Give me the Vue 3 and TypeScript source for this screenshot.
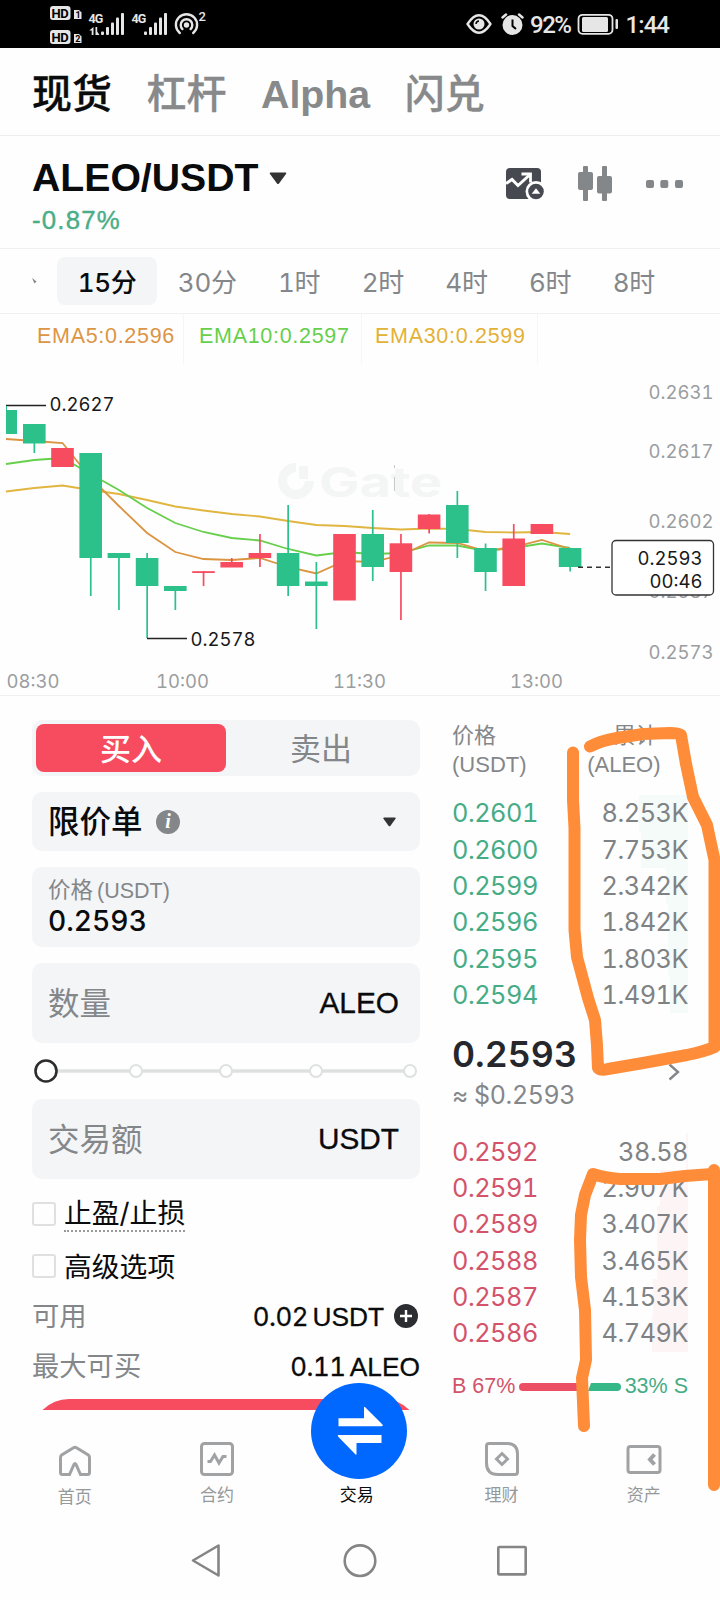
<script setup lang="ts">
interface Candle {
  open: number
  close: number
  high: number
  low: number
  up?: boolean
}
interface BookRow {
  price: string
  total: string
  depth: number
}

const topTabs = ['现货', '杠杆', 'Alpha', '闪兑']
const periods = ['15分', '30分', '1时', '2时', '4时', '6时', '8时']
const emas = [
  { text: 'EMA5:0.2596', tone: 'ema-orange' },
  { text: 'EMA10:0.2597', tone: 'ema-green' },
  { text: 'EMA30:0.2599', tone: 'ema-yellow' },
]

/* Vertical pixel positions inside the chart canvas; rising candles are red */
const candles: Candle[] = [
  { open: 424, close: 443.5, high: 424, low: 453 },
  { open: 448, close: 467, high: 448, low: 467, up: true },
  { open: 453, close: 558, high: 453, low: 596 },
  { open: 553, close: 558, high: 553, low: 610 },
  { open: 558, close: 586, high: 553, low: 638 },
  { open: 586, close: 591, high: 586, low: 610 },
  { open: 571.2, close: 573, high: 571, low: 586, up: true },
  { open: 562, close: 567.5, high: 558, low: 567, up: true },
  { open: 553, close: 558, high: 534, low: 567, up: true },
  { open: 553, close: 586, high: 505, low: 596 },
  { open: 581.5, close: 586, high: 562, low: 629 },
  { open: 534, close: 600.5, high: 534, low: 600, up: true },
  { open: 534, close: 567, high: 510, low: 581 },
  { open: 543.3, close: 572, high: 534, low: 620, up: true },
  { open: 514.5, close: 529, high: 514, low: 533.5, up: true },
  { open: 505, close: 543, high: 491, low: 558 },
  { open: 548, close: 572, high: 543.5, low: 591 },
  { open: 538.5, close: 586, high: 524, low: 586, up: true },
  { open: 524, close: 534, high: 524, low: 534, up: true },
  { open: 548, close: 567, high: 548, low: 571.5 },
]
const cx = (i: number): number => 34.3 + 28.2 * i

const lineOf = (ys: number[]): string =>
  ys.map((y, i) => `${i === 0 ? 6 : cx(i - 1).toFixed(1)},${y}`).join(' ')

const ema5 = lineOf([439, 441, 443, 478, 506, 533, 552, 559, 560, 558, 567, 573.5, 561, 562, 555, 542.5, 543, 551, 547, 540, 549])
const ema10 = lineOf([464, 460, 458, 474, 490, 508, 523, 532, 538, 540.5, 549, 555.5, 552, 554, 553, 545.5, 545.5, 551, 548, 543.5, 548])
const ema30 = lineOf([491.5, 488, 485.5, 490, 494, 500, 506.5, 510.5, 514, 516.5, 521, 525, 526, 528, 529.5, 528.5, 529, 532, 532.5, 532, 534])

const axisPrices = [
  { text: '0.2631', y: 399 },
  { text: '0.2617', y: 458 },
  { text: '0.2602', y: 528 },
  { text: '0.2587', y: 598 },
  { text: '0.2573', y: 659 },
]
const axisTimes = [
  { text: '08:30', x: 6.5 },
  { text: '10:00', x: 156 },
  { text: '11:30', x: 333 },
  { text: '13:00', x: 510 },
]

const greens: BookRow[] = [
  { price: '0.2601', total: '8.253K', depth: 49 },
  { price: '0.2600', total: '7.753K', depth: 47 },
  { price: '0.2599', total: '2.342K', depth: 22 },
  { price: '0.2596', total: '1.842K', depth: 20 },
  { price: '0.2595', total: '1.803K', depth: 20 },
  { price: '0.2594', total: '1.491K', depth: 18 },
]
const reds: BookRow[] = [
  { price: '0.2592', total: '38.58', depth: 2 },
  { price: '0.2591', total: '2.907K', depth: 28 },
  { price: '0.2589', total: '3.407K', depth: 31 },
  { price: '0.2588', total: '3.465K', depth: 31 },
  { price: '0.2587', total: '4.153K', depth: 35 },
  { price: '0.2586', total: '4.749K', depth: 36 },
]
</script>

<template>
  <div class="screen">
    <header class="status">
      <svg width="720" height="48" viewBox="0 0 720 48">
        <g fill="#e6e6e6">
          <rect x="50" y="6" width="20.5" height="14" rx="3" />
          <rect x="50" y="30" width="20.5" height="14" rx="3" />
          <path d="M74 10h5l2.5 2.5V19H74z" />
          <path d="M74 34h5l2.5 2.5V43H74z" />
          <text x="88.5" y="23" class="net">4G</text>
          <text x="131.5" y="23" class="net">4G</text>
          <text x="198.5" y="21" class="sup">2</text>
          <g v-for="o in [0, 43]" :key="o" :transform="`translate(${o} 0)`">
            <rect x="101" y="31.5" width="3" height="3.5" rx="1" />
            <rect x="106" y="27" width="3" height="8" rx="1" />
            <rect x="111" y="22.5" width="3" height="12.5" rx="1" />
            <rect x="116" y="17.5" width="3" height="17.5" rx="1" />
            <rect x="121" y="13" width="3" height="22" rx="1" />
          </g>
          <path d="M93.500 27v8h-1.800v-4.500H89.200zM95.500 27v8h4l-2.300-3.500V27z" />
          <circle cx="186.500" cy="25" r="2.700" />
          <circle cx="479" cy="24" r="5.500" />
          <circle cx="512.500" cy="25" r="10" />
          <rect x="582" y="17" width="26" height="15" rx="1.500" />
          <rect x="615.500" y="19" width="2.500" height="10" rx="1" />
          <text x="530" y="33" class="clock" textLength="42">92%</text>
          <text x="625.500" y="33" class="clock" textLength="44.500">1:44</text>
        </g>
        <g fill="#000">
          <text x="51.500" y="18" class="hd">HD</text>
          <text x="51.500" y="42" class="hd">HD</text>
          <text x="75.500" y="18" class="sim">1</text>
          <text x="75.200" y="42.200" class="sim">2</text>
        </g>
        <g fill="none" stroke="#e6e6e6" stroke-width="2.400" stroke-linecap="round">
          <path d="M182.400 29.100a5.800 5.800 0 1 1 8.200 0" />
          <path d="M179.800 33a10.600 10.600 0 1 1 13.400 0" />
          <path d="M467.500 24q11.500 -17.500 23 0q-11.500 17.500 -23 0z" stroke-linejoin="round" />
          <path d="M502.500 17.500l3.500-3M522.500 17.500l-3.500-3" />
          <rect x="578.500" y="14.800" width="34" height="19" rx="4" stroke-width="1.800" />
        </g>
        <path d="M476 24a3.200 3.200 0 0 1 3-3" stroke="#000" stroke-width="1.500" fill="none" />
        <path d="M512.500 19.500v6.500l3.500 3" stroke="#000" stroke-width="2" fill="none" />
      </svg>
    </header>

    <nav class="tabs">
      <span v-for="(t, i) in topTabs" :key="t" :class="{ on: i === 0, latin: t === 'Alpha' }">{{ t }}</span>
    </nav>

    <section class="pair">
      <div>
        <div class="name">
          <span>ALEO/USDT</span>
          <svg width="18" height="13" viewBox="0 0 18 13"><path d="M1.500 .5h15q1.500 0 .5 1.500l-7 9.500q-1 1-2 0l-7-9.500q-1-1.500 .5-1.500z" fill="#333" /></svg>
        </div>
        <div class="change">-0.87%</div>
      </div>
      <div class="tools">
        <svg width="38" height="36" viewBox="0 0 38 36">
          <rect x="0" y="2" width="35" height="31" rx="4" fill="#464a50" />
          <path d="M0 17.500l6-4 6 6 11-10" fill="none" stroke="#fff" stroke-width="3" />
          <path d="M15.500 8h9v8.500" fill="none" stroke="#fff" stroke-width="2.800" />
          <circle cx="30" cy="25.500" r="10.500" fill="#fff" />
          <circle cx="30" cy="25.500" r="7.800" fill="#464a50" />
          <path d="M25.700 27.800l4.300-5.500 4.300 5.500z" fill="#fff" />
        </svg>
        <svg width="36" height="36" viewBox="0 0 36 36" fill="#84878a">
          <rect x="6" y="0" width="5" height="35" rx="1" />
          <rect x="1" y="6" width="15" height="18" rx="2" />
          <rect x="25" y="0" width="5" height="35" rx="1" />
          <rect x="20" y="10" width="15" height="17.500" rx="2" />
        </svg>
        <svg width="37" height="8" viewBox="0 0 37 8" fill="#84878a">
          <rect width="8" height="8" rx="2" /><rect x="14.300" width="8" height="8" rx="2" /><rect x="29" width="8" height="8" rx="2" />
        </svg>
      </div>
    </section>

    <section class="periods">
      <svg class="tail" width="5" height="6" viewBox="0 0 5 6"><path d="M0 0l4.500 3.500-2 2z" fill="#84878a" /></svg>
      <span v-for="(p, i) in periods" :key="p" :class="{ on: i === 0 }">{{ p }}</span>
    </section>

    <section class="chart">
      <div class="emas">
        <span v-for="e in emas" :key="e.text" :class="e.tone">{{ e.text }}</span>
      </div>
      <svg class="canvas" width="720" height="329" viewBox="0 366 720 329">
        <g fill="#f4f5f5">
          <path d="M296 463a18 18 0 1 0 18 18h-9a9 9 0 1 1-9-9z" />
          <rect x="299" y="466" width="9" height="13" />
          <text x="319" y="497" class="mark" textLength="123" lengthAdjust="spacingAndGlyphs">Gate</text>
        </g>
        <path d="M394.500 465v3m0 9v14" stroke="#c8c8c8" />
        <g fill="none" stroke-width="1.800">
          <polyline :points="ema30" stroke="#e0b540" />
          <polyline :points="ema10" stroke="#67cf4c" />
          <polyline :points="ema5" stroke="#db9440" />
        </g>
        <rect x="6" y="410" width="11" height="24" fill="#2cc08a" />
        <g v-for="(c, i) in candles" :key="i" :fill="c.up ? '#f74b60' : '#2cc08a'">
          <rect :x="cx(i) - 0.800" :y="c.high" width="1.700" :height="c.low - c.high" />
          <rect :x="cx(i) - 11.300" :y="c.open" width="22.600" :height="c.close - c.open" />
        </g>
        <path d="M6 405.500h40M147 638.500h40" stroke="#222" stroke-width="1.300" />
        <path d="M6.500 406v5" stroke="#2cc08a" />
        <path d="M578 567.300h34" stroke="#333" stroke-width="1.400" stroke-dasharray="5 4" />
        <g class="num ink">
          <text x="49.500" y="411">0.2627</text>
          <text x="190.500" y="646">0.2578</text>
        </g>
        <g class="num axis">
          <text v-for="a in axisPrices" :key="a.text" x="713.500" :y="a.y" text-anchor="end">{{ a.text }}</text>
          <text v-for="a in axisTimes" :key="a.text" :x="a.x" y="687.500">{{ a.text }}</text>
        </g>
        <rect x="612" y="540.500" width="101.500" height="54.500" rx="4" fill="#fff" stroke="#333" stroke-width="1.300" />
        <g class="num ink" text-anchor="end">
          <text x="702.500" y="564.500">0.2593</text>
          <text x="702.500" y="587.500">00:46</text>
        </g>
      </svg>
    </section>

    <main class="trade">
      <section class="form">
        <div class="side"><b>买入</b><span>卖出</span></div>
        <div class="field type">
          <span class="strong">限价单</span>
          <svg class="info" width="24" height="24" viewBox="0 0 24 24">
            <circle cx="12" cy="12" r="12" fill="#84878a" />
            <text x="12" y="18" text-anchor="middle" class="i">i</text>
          </svg>
          <svg class="caret" width="13" height="10" viewBox="0 0 13 10"><path d="M1 .5h11q1.200 0 .5 1.200l-5 7q-1 1-2 0l-5-7Q-.2 .5 1 .5z" fill="#333" /></svg>
        </div>
        <div class="field price">
          <span class="cap">价格<i>(USDT)</i></span>
          <span class="val">0.2593</span>
        </div>
        <div class="field box"><span>数量</span><em>ALEO</em></div>
        <svg class="slider" width="388" height="56" viewBox="32 1043 388 56">
          <path d="M56 1071h350" stroke="#dfe1e1" stroke-width="3.600" />
          <g fill="#fff" stroke="#dfe1e1" stroke-width="2">
            <circle v-for="x in [136, 226, 316, 410]" :key="x" :cx="x" cy="1071" r="6" />
          </g>
          <circle cx="46" cy="1071" r="10.500" fill="#fff" stroke="#2c2d2e" stroke-width="2.600" />
        </svg>
        <div class="field box"><span>交易额</span><em>USDT</em></div>
        <label class="check first"><s></s><span class="dotted">止盈/止损</span></label>
        <label class="check"><s></s><span>高级选项</span></label>
        <div class="kv">
          <span>可用</span>
          <em>0.02 <i>USDT</i></em>
          <svg width="24" height="24" viewBox="0 0 24 24"><circle cx="12" cy="12" r="12" fill="#2c2d30" /><path d="M12 6v12M6 12h12" stroke="#fff" stroke-width="2.400" /></svg>
        </div>
        <div class="kv max"><span>最大可买</span><em>0.11 <i>ALEO</i></em></div>
        <div class="submit"><i></i></div>
      </section>

      <section class="book">
        <div class="bhead">
          <div>价格<br />(USDT)</div>
          <div class="cum"><span>累计</span><span>(ALEO)</span></div>
        </div>
        <div v-for="r in greens" :key="r.price" class="row g">
          <span>{{ r.price }}</span><span>{{ r.total }}</span><u :style="{ width: r.depth + 'px' }"></u>
        </div>
        <div class="last">
          <strong>0.2593</strong>
          <div class="approx"><span>≈ $0.2593</span></div>
          <svg class="chev" width="12" height="18" viewBox="0 0 12 18"><path d="M1.500 1.500L10 9l-8.500 7.500" fill="none" stroke="#84878a" stroke-width="2.400" /></svg>
        </div>
        <div v-for="r in reds" :key="r.price" class="row r">
          <span>{{ r.price }}</span><span>{{ r.total }}</span><u :style="{ width: r.depth + 'px' }"></u>
        </div>
        <div class="ratio">
          <span class="rb">B 67%</span>
          <svg width="102" height="8" viewBox="0 0 102 8">
            <path d="M4 0h64l-3 8H4a4 4 0 0 1 0-8z" fill="#ec4f63" />
            <path d="M72 0h26a4 4 0 0 1 0 8H69z" fill="#35b788" />
          </svg>
          <span class="rs">33% S</span>
        </div>
      </section>
    </main>

    <nav class="bottom">
      <div>
        <svg width="34" height="36" viewBox="0 0 34 36" class="ico">
          <path d="M2.500 15.500q0-1.500 1.200-2.500L15.500 5.800q1.500-1 3 0L30.300 13q1.200 1 1.200 2.500V30.500q0 2-2 2h-7L18 22.500q-1-2-2 0L11.500 32.500h-7q-2 0-2-2z" />
        </svg>
        <span class="low">首页</span>
      </div>
      <div>
        <svg width="34" height="36" viewBox="0 0 34 36" class="ico">
          <rect x="1.500" y="1.500" width="31" height="31" rx="3" />
          <path d="M7.500 19.500h3l4-6.500 4.500 8 4-6.500h3.500" />
        </svg>
        <span>合约</span>
      </div>
      <div class="now">
        <svg class="fab" width="96" height="96" viewBox="0 0 96 96">
          <circle cx="48" cy="48" r="48" fill="#0068ff" />
          <path d="M27.500 35.300h25.500V24.500q0-1.500 1.200-.3L71.500 41.500q1 1.700-.8 1.700H27.500z" fill="#fff" />
          <path d="M70.500 60H45.500v11q0 1.500-1.200 .3L27 53.500q-1-1.500 .8-1.500h42.700z" fill="#fff" />
        </svg>
        <span>交易</span>
      </div>
      <div>
        <svg width="34" height="36" viewBox="0 0 34 36" class="ico">
          <path d="M4 1.500h18q10.500 0 10.500 10.500v18q0 2.500-2.500 2.500H13Q1.500 32.500 1.500 21V4q0-2.500 2.500-2.500z" />
          <path d="M17 11.500l5.500 5.500-5.500 5.500-5.500-5.500z" />
        </svg>
        <span>理财</span>
      </div>
      <div>
        <svg width="36" height="36" viewBox="0 0 36 36" class="ico">
          <rect x="2" y="4.500" width="32" height="26" rx="2.500" />
          <path d="M28.500 12.500l-4.500 5 4.500 5" stroke-width="4" />
        </svg>
        <span>资产</span>
      </div>
    </nav>

    <footer class="system">
      <svg width="720" height="90" viewBox="0 1510 720 90" fill="none" stroke="#858585" stroke-width="2.600" stroke-linejoin="round">
        <path d="M193 1559.500L218.500 1544.500v30z" />
        <circle cx="360" cy="1559.700" r="15.300" />
        <rect x="498.300" y="1546" width="27.400" height="27.400" rx="1" />
      </svg>
    </footer>

    <svg class="marker" width="720" height="1600" viewBox="0 0 720 1600">
      <path d="M573 752.500L573 800L574.500 828L574.500 930L577 957L588 998L595 1020L597 1045L598 1068Q601 1071 608 1069L643 1063L687 1055Q706 1051 714.500 1047V860L707 825L693 797L686 764L681 735Q678 733 670 733L643 734L617 738Q600 741 590 746.500" />
      <path d="M714 1170V1485M712 1174L685 1176L660 1179L620 1179Q605 1178 593 1174L585 1195L581 1215L580 1240L581 1277L585 1310L586 1360L582 1378L583 1402L584 1426" />
    </svg>
  </div>
</template>

<style>
body {
  margin: 0;
  background: #fff;
}
</style>

<style scoped>
.screen {
  position: relative;
  width: 720px;
  height: 1600px;
  overflow: hidden;
  background: #fefefe;
  color: #0a0b0c;
  font-family: Inter, "Noto Sans CJK SC", sans-serif;
  font-feature-settings: "tnum";
}
svg { display: block; flex: none; }
em, i { font-style: normal; }
.status { height: 48px; background: #000; }
.net { font: 700 12.5px Roboto, sans-serif; letter-spacing: -0.8px; }
.sup { font: 500 13px Roboto, sans-serif; }
.hd { font: 700 13px Roboto, sans-serif; letter-spacing: -0.5px; }
.sim { font: 700 9px Roboto, sans-serif; }
.clock { font: 500 24px Roboto, sans-serif; }

.tabs {
  box-sizing: border-box;
  height: 88px;
  padding: 4px 32px 0;
  display: flex;
  align-items: center;
  gap: 34.5px;
  border-bottom: 1px solid #eee;
  font-size: 40px;
  line-height: 56px;
  font-weight: 500;
  color: #87898b;
}
.tabs span { -webkit-text-stroke: 0.3px currentColor; }
.tabs .on { color: #0a0b0c; }
.tabs .latin { font-family: "Liberation Sans", sans-serif; font-size: 39.300px; font-weight: 700; -webkit-text-stroke: 0; }
.pair {
  box-sizing: border-box;
  height: 113px;
  padding: 22px 37px 0 32px;
  display: flex;
  justify-content: space-between;
  border-bottom: 1px solid #f0f0f0;
}
.name {
  display: flex;
  align-items: center;
  gap: 11px;
  font-family: "Liberation Sans", sans-serif;
  font-size: 39.200px;
  font-weight: 700;
  line-height: 42px;
  margin-top: -1px;
}
.change {
  margin-top: 6px;
  font-family: "Liberation Sans", sans-serif;
  font-size: 25.800px;
  letter-spacing: 1.200px;
  line-height: 31px;
  -webkit-text-stroke: 0.4px #4bad87;
  color: #4bad87;
}
.tools { display: flex; align-items: center; height: 52px; gap: 33px; }
.periods {
  box-sizing: border-box;
  height: 65px;
  padding-left: 32px;
  display: flex;
  align-items: center;
  border-bottom: 1px solid #f0f0f0;
  font-size: 26px;
  line-height: 44px;
  letter-spacing: -0.3px;
  color: #84878a;
}
.periods span { box-sizing: border-box; height: 48px; padding: 4px 20.700px 0; white-space: nowrap; }
.periods .on { margin-left: 20px; border-radius: 8px; background: #f4f5f7; color: #0a0b0c; font-weight: 500; }
.chart { height: 382px; box-sizing: border-box; border-bottom: 1px solid #f0f0f0; }
.emas {
  display: flex;
  height: 52px;
  padding-left: 30px;
  font-family: "Liberation Sans", sans-serif;
  font-size: 21.500px;
  letter-spacing: 0.700px;
  line-height: 45px;
}
.emas span { box-sizing: border-box; height: 50px; padding-left: 7px; border-right: 1px solid #f6f6f6; white-space: nowrap; }
.ema-orange { width: 154px; color: #dc9545; }
.emas .ema-green { width: 178px; padding-left: 15px; color: #66cf4c; }
.emas .ema-yellow { width: 176px; padding-left: 13px; color: #e3b137; }
.mark { font: 700 41px Inter, sans-serif; }
.num { font-size: 18.500px; }
.ink { fill: #17181a; }
.axis { fill: #9a9d9f; }

.trade { display: flex; height: 714px; overflow: hidden; }
.form { width: 388px; margin-left: 32px; padding-top: 24px; }
.side {
  box-sizing: border-box;
  height: 56px;
  padding: 4px;
  display: flex;
  border-radius: 10px;
  background: #f4f5f7;
  font-size: 31px;
  line-height: 48px;
  text-align: center;
}
.side b { width: 190px; border-radius: 8px; background: #f74b60; color: #fff; font-weight: 500; line-height: 50px; height: 48px; }
.side span { flex: 1; font-weight: 400; color: #84878a; line-height: 50px; height: 48px; }
.field { box-sizing: border-box; display: flex; padding: 0 21px 0 16px; border-radius: 10px; background: #f4f5f7; }
.type { height: 59px; margin-top: 16px; align-items: center; }
.strong { font-size: 31.500px; font-weight: 500; line-height: 58px; margin-top: 1px; }
.info { margin-left: 13.500px; }
.i { font: italic 700 20px "Liberation Serif", serif; fill: #fff; }
.caret { margin-left: auto; margin-right: 3px; }
.price { height: 80px; margin-top: 16px; flex-direction: column; padding-top: 8px; }
.cap { font-size: 22.500px; line-height: 30px; color: #84878a; }
.cap i { margin-left: 4px; font-family: "Liberation Sans", sans-serif; font-size: 21.500px; }
.val { margin-top: -2px; font-size: 28.200px; font-weight: 500; line-height: 34px; }
.box { height: 80px; margin-top: 16px; align-items: center; justify-content: space-between; line-height: 78px; font-size: 31.500px; color: #84878a; }
.box span { margin-top: 2px; }
.box em { color: #0a0b0c; font-family: "Liberation Sans", sans-serif; font-size: 29.800px; -webkit-text-stroke: 0.3px #0a0b0c; }
.slider + .box { margin-top: 0; }
.check { display: flex; align-items: center; height: 40px; margin-top: 12px; font-size: 27.800px; }
.check.first { margin-top: 15px; }
.check s { box-sizing: border-box; width: 24px; height: 24px; border: 2px solid #dfe0e1; border-radius: 3px; margin-right: 8px; }
.check span { line-height: 38px; margin-top: 2px; }
.check .dotted { box-sizing: border-box; height: 36px; line-height: 35px; border-bottom: 2px dotted #999; margin-top: -1px; }
.kv { display: flex; align-items: center; height: 50px; margin-top: 5px; font-size: 27.300px; line-height: 48px; color: #84878a; }
.kv span { margin-top: 2px; }
.kv em { margin-left: auto; margin-top: 2px; color: #0a0b0c; font-size: 25.800px; word-spacing: -2px; -webkit-text-stroke: 0.3px #0a0b0c; letter-spacing: -0.500px; }
.kv em i { font-family: "Liberation Sans", sans-serif; font-size: 26.300px; letter-spacing: 0; }
.kv svg { margin-left: 10px; margin-right: 2px; }
.kv.max { margin-top: 0; }
.submit { margin-top: 8px; height: 13px; overflow: hidden; }
.submit i { display: block; height: 80px; border-radius: 37px; background: #f74b60; }

.book { width: 236px; margin-left: 32px; padding-top: 24px; }
.bhead { box-sizing: border-box; display: flex; justify-content: space-between; height: 75px; padding-top: 1px; font-family: "Liberation Sans", "Noto Sans CJK SC", sans-serif; font-size: 22px; line-height: 29px; color: #84878a; }
.cum { display: flex; flex-direction: column; align-items: flex-end; margin-right: 27.500px; }
.cum span:first-child { margin-right: 3px; }
.row {
  position: relative;
  height: 36.4px;
  display: flex;
  align-items: center;
  justify-content: space-between;
  font-size: 25.300px;
  letter-spacing: -0.500px;
  line-height: 36px;
  color: #7f8284;
}
.row span { position: relative; z-index: 1; }
.row u { position: absolute; right: 0; top: 0; bottom: 0; background: #f4fbf9; }
.row.r u { background: #fdf5f5; }
.row.g span:first-child { color: #45ac85; }
.row.r span:first-child { color: #d2536a; }
.last { position: relative; height: 120px; }
.last strong { display: block; padding-top: 19px; font-size: 35.700px; line-height: 44px; font-weight: 600; color: #25272c; }
.approx { font-size: 25px; letter-spacing: -0.400px; line-height: 39px; color: #84878a; }
.chev { position: absolute; right: 8px; top: 50px; }
.ratio { display: flex; align-items: center; justify-content: space-between; height: 30px; margin-top: 20px; font-family: "Liberation Sans", sans-serif; font-size: 21.500px; }
.rb { color: #d2536a; }
.rs { color: #45ac85; }

.bottom { display: flex; height: 101px; padding: 0 5px 0 3.500px; box-sizing: border-box; position: relative; }
.bottom div { flex: 1; display: flex; flex-direction: column; align-items: center; padding-top: 32px; font-size: 17px; line-height: 24px; color: #96999b; }
.bottom span { margin-top: 5px; }
.bottom .low { margin-top: 7px; }
.ico { fill: none; stroke: #a0a2a4; stroke-width: 3; }
.bottom .now { padding-top: 73px; color: #0a0b0c; }
.bottom .now span { margin: 0 5px 0 0; }
.fab { position: absolute; left: 311px; top: -27px; }
.system { height: 90px; }
.marker { position: absolute; z-index: 5; left: 0; top: 0; fill: none; stroke: #ff8c38; stroke-width: 12; stroke-linecap: round; stroke-linejoin: round; }
</style>
